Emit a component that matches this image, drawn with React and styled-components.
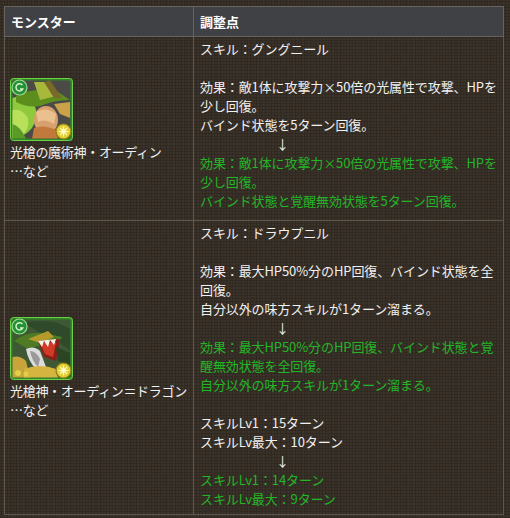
import React from 'react'
import styled, { createGlobalStyle } from 'styled-components'

const GlobalStyle = createGlobalStyle`
    html, body {
        margin: 0;
        background-color: #3a3229;
    }
    body {
        font-family: "Noto Sans CJK JP", "Noto Sans", sans-serif;
        font-size: 13px;
        color: #f1f1f1;
    }
`;

const Page = styled.div`
    width: 510px;
    height: 518px;
    box-sizing: border-box;
    padding: 6px 0 0 4px;
    overflow: hidden;
    background-color: #3a3229;
    background-image:
        radial-gradient(rgba(0, 0, 0, 0.18) 1px, transparent 1.2px),
        radial-gradient(rgba(255, 255, 255, 0.035) 1px, transparent 1.2px);
    background-size: 3px 3px, 5px 4px;
    background-position: 0 0, 1px 2px;
`;

const Table = styled.table`
    width: 500px;
    border-collapse: collapse;
    table-layout: fixed;
    border: 1px solid #625c53;
`;

const Head = styled.th`
    height: 30px;
    padding: 0 6px;
    box-sizing: border-box;
    background: #404144;
    border: 1px solid #67645f;
    text-align: left;
    font-weight: bold;
    font-size: 13px;
    color: #ffffff;
    width: ${p => p.$width};
`;

const Cell = styled.td`
    border: 1px solid #5c564d;
    padding: ${p => (p.$monster ? '4px 5px' : `2px 2px ${p.$bottom || 6}px 6px`)};
    vertical-align: ${p => (p.$monster ? 'middle' : 'top')};
    line-height: 19px;
`;

const Monster = styled.div`
    display: flex;
    flex-direction: column;
    align-items: flex-start;
    gap: 1px;
`;

const Name = styled.div`
    white-space: nowrap;
    letter-spacing: -0.3px;
`;

const Line = styled.div`
    min-height: 19px;
    white-space: nowrap;
    letter-spacing: -0.1px;
    color: ${p => (p.$green ? '#22b626' : '#f1f1f1')};
`;

const Arrow = styled.div`
    height: 19px;
    padding-left: 76px;
`;

const IconFrame = styled.svg`
    display: block;
    width: 63px;
    height: 63px;
`;

const Badges = () => (
    <>
        <circle cx="9.5" cy="9.5" r="7.5" fill="#23913a" stroke="#9fdc8a" strokeWidth="1.2" />
        <path d="M12.5 7.2 A3.6 3.6 0 1 0 12.8 11 L10 11" fill="none" stroke="#d8f5c8" strokeWidth="1.4" />
        <circle cx="53.5" cy="53.5" r="7.5" fill="#e2cf36" stroke="#8d7d16" strokeWidth="1.2" />
        <g stroke="#fff7b0" strokeWidth="1.2">
            <line x1="53.5" y1="48.5" x2="53.5" y2="58.5" />
            <line x1="48.5" y1="53.5" x2="58.5" y2="53.5" />
            <line x1="50" y1="50" x2="57" y2="57" />
            <line x1="57" y1="50" x2="50" y2="57" />
        </g>
        <circle cx="53.5" cy="53.5" r="2.2" fill="#fffbd0" />
    </>
);

const OdinIcon = () => (
    <IconFrame viewBox="0 0 63 63">
        <rect x="0.5" y="0.5" width="62" height="62" rx="3" fill="#2f8a22" stroke="#6ccf4a" />
        <rect x="2.5" y="2.5" width="58" height="58" rx="2" fill="#4b4a47" />
        <path d="M2.5 20 Q14 16 24 26 Q30 38 22 50 Q14 60 2.5 60 Z" fill="#8fca3c" />
        <path d="M2.5 32 Q12 30 18 40 Q20 52 10 60 L2.5 60 Z" fill="#b8e05a" />
        <path d="M6 18 Q26 8 48 14 L60 22 Q44 22 30 28 Q18 30 6 24 Z" fill="#5c8e1e" />
        <path d="M24 4 L38 4 L46 18 L30 22 Z" fill="#a8b83a" />
        <path d="M34 4 L40 2.5 L52 20 L44 20 Z" fill="#7a6a2a" />
        <ellipse cx="36" cy="42" rx="12" ry="14" fill="#d7a06e" />
        <path d="M26 34 Q36 28 46 36 L44 46 Q36 40 28 44 Z" fill="#e9c08e" />
        <path d="M24 50 Q34 46 46 52 L48 60.5 L22 60.5 Z" fill="#c27a3c" />
        <path d="M44 26 L60 24 L60 40 L50 36 Z" fill="#caa24a" />
        <path d="M2.5 46 Q10 48 16 60.5 L2.5 60.5 Z" fill="#5a9a26" />
        <Badges />
    </IconFrame>
);

const DragonIcon = () => (
    <IconFrame viewBox="0 0 63 63">
        <rect x="0.5" y="0.5" width="62" height="62" rx="3" fill="#2f8a22" stroke="#6ccf4a" />
        <rect x="2.5" y="2.5" width="58" height="58" rx="2" fill="#3e5734" />
        <path d="M14 6 Q30 2 48 6 L60 12 L60 34 Q50 24 40 22 Z" fill="#2f4a2a" />
        <path d="M4 24 Q16 14 34 16 L52 20 L46 30 Q30 26 18 32 Z" fill="#4f7a24" />
        <path d="M18 22 L38 14 L44 20 L30 26 Z" fill="#b59a2a" />
        <path d="M28 24 L50 22 L46 44 L34 40 Z" fill="#8a1e18" />
        <path d="M30 26 L46 25 L43 40 L35 37 Z" fill="#d23a28" />
        <path d="M28 24 L32 30 L34 24 L38 30 L40 23 L44 28 L46 22 Z" fill="#f2f2e6" />
        <path d="M16 32 Q24 28 30 34 L36 50 L26 52 Q18 44 16 32 Z" fill="#dcdcdc" />
        <path d="M20 34 Q26 34 30 42 L28 50 Q22 44 20 34 Z" fill="#9a9a9a" />
        <path d="M2.5 40 Q10 38 16 44 L20 60.5 L2.5 60.5 Z" fill="#c9a43a" />
        <path d="M14 52 Q30 46 46 52 L48 60.5 L14 60.5 Z" fill="#d5b440" />
        <path d="M46 30 L60 36 L60 48 L48 44 Z" fill="#2a4424" />
        <circle cx="8" cy="56" r="3" fill="#e3cf4a" />
        <circle cx="16" cy="57" r="2.5" fill="#e3cf4a" />
        <Badges />
    </IconFrame>
);

const App = () => {
    return (
        <Page>
            <GlobalStyle />
            <Table>
                <thead>
                    <tr>
                        <Head $width="189px">モンスター</Head>
                        <Head>調整点</Head>
                    </tr>
                </thead>
                <tbody>
                    <tr>
                        <Cell $monster>
                            <Monster>
                                <OdinIcon />
                                <div>
                                    <Name>光槍の魔術神・オーディン</Name>
                                    <Name>…など</Name>
                                </div>
                            </Monster>
                        </Cell>
                        <Cell $bottom={10}>
                            <Line>スキル：グングニール</Line>
                            <Line />
                            <Line>効果：敵1体に攻撃力×50倍の光属性で攻撃、HPを<br />少し回復。</Line>
                            <Line>バインド状態を5ターン回復。</Line>
                            <Arrow>↓</Arrow>
                            <Line $green>効果：敵1体に攻撃力×50倍の光属性で攻撃、HPを<br />少し回復。</Line>
                            <Line $green>バインド状態と覚醒無効状態を5ターン回復。</Line>
                        </Cell>
                    </tr>
                    <tr>
                        <Cell $monster>
                            <Monster>
                                <DragonIcon />
                                <div>
                                    <Name>光槍神・オーディン＝ドラゴン</Name>
                                    <Name>…など</Name>
                                </div>
                            </Monster>
                        </Cell>
                        <Cell>
                            <Line>スキル：ドラウプニル</Line>
                            <Line />
                            <Line>効果：最大HP50%分のHP回復、バインド状態を全<br />回復。</Line>
                            <Line>自分以外の味方スキルが1ターン溜まる。</Line>
                            <Arrow>↓</Arrow>
                            <Line $green>効果：最大HP50%分のHP回復、バインド状態と覚<br />醒無効状態を全回復。</Line>
                            <Line $green>自分以外の味方スキルが1ターン溜まる。</Line>
                            <Line />
                            <Line>スキルLv1：15ターン</Line>
                            <Line>スキルLv最大：10ターン</Line>
                            <Arrow>↓</Arrow>
                            <Line $green>スキルLv1：14ターン</Line>
                            <Line $green>スキルLv最大：9ターン</Line>
                        </Cell>
                    </tr>
                </tbody>
            </Table>
        </Page>
    )
}

export default App
